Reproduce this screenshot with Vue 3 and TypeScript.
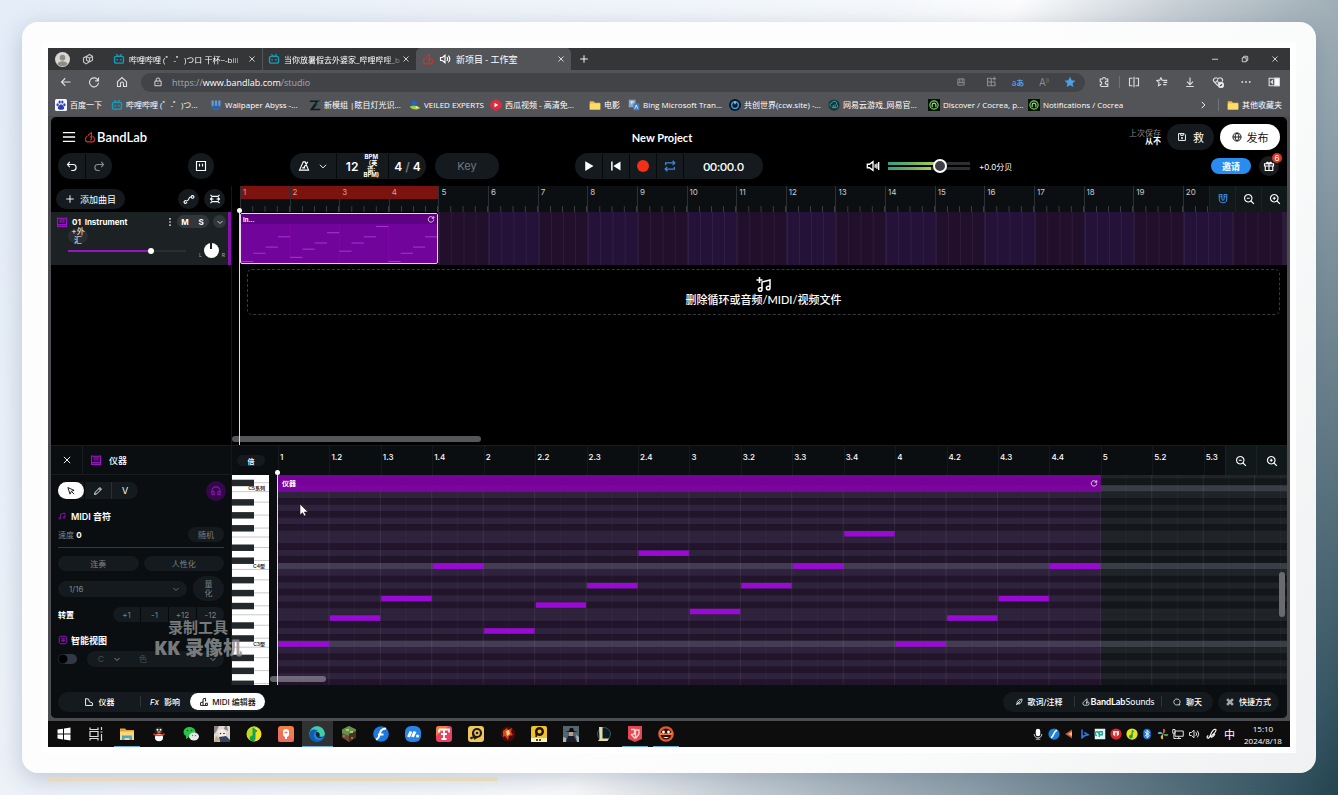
<script setup lang="ts">
import { ref } from 'vue'

const ic: Record<string, string> = {
  copies: 'M6 4.5 10 2l4 2.5v5L10 12M10 12 6 9.5v-5M6 4.5l-4 2v5.500l3.500 2.500 4-2.500M10 12V7l4-2.500M10 7 6 4.500',
  close: 'M3 3l10 10M13 3L3 13',
  plus: 'M8 2v12M2 8h12',
  back: 'M14 8H2M7 3L2 8l5 5',
  reload: 'M13.500 6A6 6 0 1 0 14 9M14 2v4.500H9.500',
  home: 'M2 7.500 8 2l6 5.500V14h-4v-4a2 2 0 0 0-4 0v4H2z',
  lock: 'M3 6.500h10V14H3zM5 6.500V4.500a3 3 0 0 1 6 0v2M8 9.500v1.500',
  speaker: 'M2 6v4h2.500L8 13V3L4.500 6zM10.500 5.500a4 4 0 0 1 0 5M12.500 3.500a7 7 0 0 1 0 9',
  app: 'M3 3h10v10H3zM6 3v6M10 3v6M3 9h10',
  grid: 'M2 3h5v5H2zM2 8h5v5H2zM7 8h5v5H7zM11 1v5M8.500 3.500h5',
  puzzle: 'M3 4h3a2 2 0 0 1 4 0h3v3.500a2 2 0 1 0 0 3V14H4.500A2.500 2.500 0 0 1 3 11.500a2 2 0 1 0 0-4z',
  split: 'M6 3H2v10h4M10 3h4v10h-4M8 1v14',
  favs: 'M6.500 2 8 5.500l3 .3M6.500 2 5 5.500l-4 .5 3 2.800L3.300 13l3.500-2M10 8.500h5M11 5.800h4M9.500 11.500H14',
  down: 'M8 2v9M4 7.500 8 11.500l4-4M3 14h10',
  heart: 'M8 13 2.500 7.500a3 3 0 0 1 5.500-3.500 3 3 0 0 1 5.500 3.500M2.500 8h3l1.500-2 2 4 1-2',
  chevR: 'M6 3l5 5-5 5',
  chevD: 'M3 6 8 11 13 6',
  menu: 'M1 3h14M1 8h14M1 13h14',
  undo: 'M5 2.500 2 6l3 3.500M2 6h7.500a4 4 0 0 1 0 8H7',
  redo: 'M11 2.500 14 6l-3 3.500M14 6H6.500a4 4 0 0 0 0 8H9',
  pads: 'M2 2h12v12H2zM6 5v3.500M10 5v3.500',
  metro: 'M7 2.500h2.500L14 13.500H2zM13 2.500 7.500 10.500M5.500 10.500h4',
  loop: 'M3 7V4.500h10.500M11 2l2.500 2.500L11 7M13 9v2.500H2.500M5 9l-2.500 2.500L5 14',
  vol: 'M1.500 6v4h2.500L8 13V3L4 6zM10.500 6v4M12.500 5v6M14.500 3.500v9',
  save: 'M2.500 2.500h9l2 2v9h-11zM6 2.500v3h4v-3M8 8v3.500M6.500 9.500h3',
  globe: 'M8 1.500a6.500 6.500 0 1 0 .01 0M1.500 8h13M8 1.500c-4 4-4 9 0 13M8 1.500c4 4 4 9 0 13',
  gift: 'M2 5h12v3H2zM3 8v6h10V8M8 5v9M8 5C3 5 5 .5 8 5M8 5c5 0 3-4.500 0 0',
  auto: 'M5 12a1.800 1.800 0 1 1-.6-1.300C9 11 6.500 5.500 10.500 5M14 4a1.800 1.800 0 1 1-.01-.01',
  fit: 'M2 2.500 4 4.500h8l2-2M2 13.500l2-2h8l2 2M1.500 8H6M10 8h4.500M4 6 2 8l2 2M12 6l2 2-2 2',
  piano: 'M2 3h12v11H2zM2 3V1.500M14 3V1.500M5.500 3v6M8 3v6M10.500 3v6M2 11.500h12',
  magnet: 'M3 2v6a5 5 0 0 0 10 0V2H9.500v6a1.500 1.500 0 0 1-3 0V2zM3 5h3.500M9.500 5H13',
  zoomOut: 'M7 2a5 5 0 1 0 .01 0M11 11l3.500 3.500M5 7h4',
  zoomIn: 'M7 2a5 5 0 1 0 .01 0M11 11l3.500 3.500M5 7h4M7 5v4',
  cycle: 'M13 6.500A5.500 5.500 0 1 0 13.500 9M13.500 2.500v4h-4',
  music: 'M6 12.500V5l8-2v8M6 12.500a1.800 1.800 0 1 1-1.800-1.800H6M14 11a1.800 1.800 0 1 1-1.800-1.800H14M3.500 0v6M.5 3h6',
  note: 'M5 12.500V4l9-2v9M5 12.500a1.800 1.800 0 1 1-1.800-1.800H5M14 11a1.800 1.800 0 1 1-1.800-1.800H14',
  arrow: 'M3 2.500 13 7 8.500 8.500 6.500 13zM9 9l4 4',
  pencil: 'M2.500 13.500 3.500 10 11 2.500l2.500 2.500L6 12.500zM9.500 4l2.500 2.500',
  phones: 'M2.500 13V8a5.500 5.500 0 0 1 11 0v5h-3V9h3M2.500 9h3v4h-3',
  smart: 'M2 3.500 3.500 2h9L14 3.500v9L12.500 14h-9L2 12.500zM5 6h6M5 9h6M8 6v5.500',
  keys: 'M2.500 13.500v-11l5 1 1 4 5 2v4z',
  midi: 'M2.500 13.500V9l4-1V3l4-1v5M2.500 13.500h11V10h-3M6.500 8v5M10.500 10v3.500',
  feather: 'M2 14 11 5M4 12c-1-6 4-9 10-10 0 6-3 11-10 10M6 10h4',
  chat: 'M8 2a6 6 0 1 0 2 11.500l3.500.5-.5-2.500A6 6 0 0 0 8 2',
  cmd: 'M6 6H4a2 2 0 1 1 2-2v8a2 2 0 1 1-2-2h8a2 2 0 1 1-2 2V4a2 2 0 1 1 2 2H6',
  flame: 'M4.500 6.500C1 9 1 14.500 5 14.500h6c4 0 4-5.500.5-8M8 12a2 2 0 1 0 0-4.200M10 10V1.500C9 4 6 3.500 5.500 6.500',
  min: 'M2 8.500h12',
  restore: 'M2.500 5.500h8v8h-8zM5 5V4a1.500 1.500 0 0 1 1.500-1.500H12A1.500 1.500 0 0 1 13.500 4v6a1.500 1.500 0 0 1-1.500 1.500h-1',
  taskview: 'M2 1.500v2h8v-2M2 14.500v-2h8v2M2 5.500h8v5H2zM13.500 1v3M13.500 8v7M12.500 6h2',
  net: 'M4 4h11v7H4zM9 11v3M6 14h6M1 2h3v5H1zM2.500 7v7H6',
  pen: 'M3 10c-3 2-1 5 1 3s2-5 4-8 4-4 5-3 0 3-3 6-4 3-3 4 3-1 5-4',
}

const bili = '<rect x="2" y="4.500" width="12" height="9" rx="2" fill="none" stroke="#10a0bd" stroke-width="1.800"/><path d="M4.500 1.500 7 4.500M11.500 1.500 9 4.500M5.500 8v2M10.500 8v2" stroke="#10a0bd" stroke-width="1.700"/>'
const folder = '<path d="M1 3h5l2 2h7v9H1z" fill="#eebd3c"/><path d="M1 6h14v8H1z" fill="#fddc6b"/>'
const cocrea = '<rect width="16" height="16" fill="#061006"/><circle cx="8" cy="8" r="5.500" fill="none" stroke="#71cf57" stroke-width="1.600"/><path d="M5.500 11V8a2.500 2.500 0 0 1 5 0v3" fill="none" stroke="#9be676" stroke-width="1.500"/>'

const bookmarks = [
  { t: '百度一下', w: 56, art: '<rect width="16" height="16" rx="2" fill="#f4f7ff"/><g fill="#2740b8"><ellipse cx="3.500" cy="7.500" rx="1.500" ry="2"/><ellipse cx="6.200" cy="4" rx="1.500" ry="2"/><ellipse cx="9.800" cy="4" rx="1.500" ry="2"/><ellipse cx="12.500" cy="7.500" rx="1.500" ry="2"/><path d="M8 7c2 0 5 4 4 6s-7 1.500-8 0 2-6 4-6"/></g>' },
  { t: '哔哩哔哩 (゜-゜)つ...', w: 99, art: bili },
  { t: 'Wallpaper Abyss -...', w: 99, art: '<path d="M2 2v7a6 5 0 0 0 12 0V2h-3v7H9.500V2h-3v7H5V2z" fill="#5b9ee0"/><path d="M2 9a6 5 0 0 0 12 0z" fill="#2b62ad"/>' },
  { t: '新模组 |眩目灯光识...', w: 100, art: '<path d="M1 2h14L6 13h9v2H1l8-11H1z" fill="#0b1d1c"/><path d="M8 8l6-6v3z" fill="#19796a"/>' },
  { t: 'VEILED EXPERTS', w: 81, art: '<path d="M4 1l6 3v7L4 9z" fill="#2366c9"/><path d="M1 10c4-2 10-1 14 2-4 3-12 3-14-2" fill="#aacb3c"/><path d="M9 9l4 2-4 2z" fill="#eee9c0"/>' },
  { t: '西瓜视频 - 高清免...', w: 99, art: '<path d="M8 0c4 2 8 4 8 8s-4 6-8 8c-4-2-8-4-8-8s4-6 8-8" fill="#dd2b3f"/><path d="M6 5l5 3-5 3z" fill="#fff"/>' },
  { t: '电影', w: 39, art: folder },
  { t: 'Bing Microsoft Tran...', w: 101, art: '<rect x="1" y="1" width="9" height="10" fill="#8ba6c4"/><rect x="7" y="6" width="8" height="9" fill="#477fc4"/><path d="M3 4h5M5 3v4M9 13l2-5 2 5" stroke="#fff" fill="none"/>' },
  { t: '共创世界(ccw.site) -...', w: 99, art: '<circle cx="8" cy="8" r="8" fill="#06182a"/><circle cx="8" cy="8" r="4.500" fill="none" stroke="#3b9cd8" stroke-width="2"/><path d="M8 3v4" stroke="#c7efff" stroke-width="1.500"/>' },
  { t: '网易云游戏_网易官...', w: 100, art: '<circle cx="8" cy="8" r="7.500" fill="#12363e"/><path d="M3.500 10a3 3 0 0 1 2-5 3 3 0 0 1 6 2 2.500 2.500 0 0 1 0 4.500H5M7 12V8M9.500 12V7" fill="none" stroke="#33aaa3" stroke-width="1.300"/>' },
  { t: 'Discover / Cocrea, p...', w: 100, art: cocrea },
  { t: 'Notifications / Cocrea', w: 96, art: cocrea },
]

const tasks = [
  { n: 'Windows', art: '<path d="M1.500 3.500 7 2.700V7.600H1.500zM8 2.500l6.500-1v6.100H8zM1.500 8.500H7v4.900l-5.500-.8zM8 8.500h6.500v6L8 13.600z" fill="#fff"/>' },
  { n: 'Task view', art: `<path d="${ic.taskview}" fill="none" stroke="#ddd" stroke-width="1.200"/>` },
  { n: 'Explorer', on: 1, art: '<path d="M1 2.500h5l1.500 1.500H15v10H1z" fill="#e3a33a"/><path d="M1 5.500h14V14H1z" fill="#fbd873"/><path d="M3 14V9.500h10V14h-2.500v-2h-5v2z" fill="#4aa5d8"/>' },
  { n: 'QQ', art: '<ellipse cx="8" cy="9.500" rx="5.500" ry="5.500" fill="#1b1414"/><ellipse cx="8" cy="5" rx="4" ry="4" fill="#2b2525"/><ellipse cx="8" cy="11.500" rx="4" ry="3.800" fill="#fff"/><path d="M2.500 7c3 2 8 2 11 0v2c-3 1.500-8 1.500-11 0z" fill="#e43a2c"/><circle cx="6.500" cy="3.700" r="1" fill="#fff"/><circle cx="9.500" cy="3.700" r="1" fill="#fff"/><ellipse cx="8" cy="6" rx="2" ry=".8" fill="#f2a33a"/>' },
  { n: 'WeChat', art: '<ellipse cx="6.500" cy="6" rx="6" ry="5" fill="#28c445"/><path d="M3 9v4l3-2z" fill="#28c445"/><ellipse cx="11" cy="10.500" rx="5" ry="4" fill="#e8e8e8"/><circle cx="9.500" cy="9.500" r=".7" fill="#777"/><circle cx="12.500" cy="9.500" r=".7" fill="#777"/><circle cx="4.500" cy="4.500" r=".8" fill="#0a5a18"/><circle cx="8.500" cy="4.500" r=".8" fill="#0a5a18"/>' },
  { n: 'Game', art: '<rect width="16" height="16" rx="1" fill="#dcd8d5"/><path d="M0 0h5l-3 6-2 2zM11 0h2l1 5-4-2z" fill="#8e8282"/><path d="M4 5c3-3 7-2 8 1v5H5z" fill="#f7ece6"/><path d="M5 11l7-1 4 4v2H6z" fill="#38425f"/><path d="M2 10l4 3-2 3H0z" fill="#bfae8e"/><circle cx="6.500" cy="7.500" r=".8" fill="#333"/><circle cx="10" cy="7.500" r=".8" fill="#333"/>' },
  { n: 'Music', art: '<circle cx="8" cy="8" r="7.500" fill="#f3df1f"/><path d="M8 .5A7.500 7.500 0 0 0 4 14l3-4-1-5 5-4z" fill="#b9dd1e"/><path d="M7 2l4 3-2 1v6a2.500 2.500 0 1 1-2-2z" fill="#16a05a" stroke="#16a05a"/>' },
  { n: 'Voice', art: '<rect width="16" height="16" rx="3" fill="#ee7f4c"/><path d="M0 16V4l16 9v3z" fill="#e6606c" opacity=".5"/><rect x="5" y="3" width="6" height="8" rx="3" fill="#fff"/><path d="M8 10v3" stroke="#fff" stroke-width="2"/><path d="M6.500 6.500h3" stroke="#ef7c54" stroke-width="1.500"/>' },
  { n: 'Edge', on: 1, act: 1, art: '<circle cx="8" cy="8" r="7.800" fill="#1f7fd4"/><path d="M.5 7A7.700 7.700 0 0 1 15.800 7c.3 3-2.500 4-5 3.500C12 7 9 5 6.500 5.500 3.500 5.500 1 7 .5 9z" fill="#42cf9d"/><path d="M.3 8C1 3 6 2.500 9 5 5 5 3.500 9 6 12.500c2 2.500 6 2 8-.5C10 19 0 16 .3 8" fill="#0f5db3"/><path d="M7 6.500c3-1 4.500 2 3 4 1.500 1 4.500.7 5.500-.5C12 14 6 12 7 6.500" fill="#202225"/>' },
  { n: 'Minecraft', art: '<path d="M8 0l7 3.500v8L8 16l-7-4.500v-8z" fill="#6d4b34"/><path d="M8 0l7 3.500V7L8 10 1 7V3.500z" fill="#609345"/><path d="M8 8v8l7-4.500V5z" fill="#49301f"/><path d="M5 3h3v2H5zM9 5h3v2H9z" fill="#afc386"/><path d="M2 9h2v2H2zM10 11h2v2h-2z" fill="#9b7454"/>' },
  { n: 'Fl', art: '<circle cx="8" cy="8" r="7.800" fill="#1e78e0"/><path d="M13 2.500C8 3 7.500 5 6.500 9S5 12.500 3 13.500M5 8.500h5.500" stroke="#fff" stroke-width="2" fill="none"/>' },
  { n: 'Mumu', art: '<rect width="16" height="16" rx="6" fill="#2a83e6"/><path d="M3.500 11 6 5.500M7.500 11 10 5.500" stroke="#fff" stroke-width="3" fill="none"/><circle cx="12.500" cy="10" r="1.500" fill="#fff"/>' },
  { n: 'Tools', art: '<rect width="16" height="16" rx="3" fill="#e54361"/><path d="M0 10V3a3 3 0 0 1 3-3h10z" fill="#ef7b42"/><path d="M3 3.500h10v3M3 6.500v-3M8 3.500V13M5 8h6M5.500 13h5" fill="none" stroke="#fff" stroke-width="1.800"/>' },
  { n: 'Potplayer', art: '<rect width="16" height="16" rx="3" fill="#edc65c"/><circle cx="9" cy="7" r="4" fill="none" stroke="#201a0c" stroke-width="2.200"/><circle cx="9" cy="7" r="1.300" fill="#201a0c"/><path d="M5.500 8v4M9 11l-3 2" stroke="#201a0c" stroke-width="2"/><circle cx="3.500" cy="12" r="1.300" fill="#201a0c"/>' },
  { n: 'Fire', art: '<circle cx="8" cy="8" r="7.500" fill="#4c0808"/><path d="M3 5l4-3 1 2 4-2-1 4 2 3-4 1-1 4-3-4-2 1z" fill="#d94521"/><path d="M6 5l3-1 1 4-3 2z" fill="#f9d587"/>' },
  { n: 'Player', art: '<rect width="16" height="16" rx="2" fill="#f0c128"/><path d="M0 12h16v4H0z" fill="#fff3bd"/><circle cx="8.500" cy="5.500" r="3.300" fill="none" stroke="#1d1603" stroke-width="2.400"/><path d="M5.200 5v6M6 13v2M9 13v2" stroke="#1d1603" stroke-width="1.500"/>' },
  { n: 'Photo', art: '<rect width="16" height="16" fill="#54656f"/><path d="M2 6l4-1 1-3h3l1 3 4 1z" fill="#0b0b0f"/><path d="M6 6h4v4H6z" fill="#b69c91"/><path d="M3 16l2-6h6l3 6z" fill="#1b1d27"/><path d="M0 11l3 1v4H0zM13 9l3 2v5h-2z" fill="#a8b6bb"/>' },
  { n: 'League', art: '<circle cx="9" cy="8" r="6.500" fill="#0c1b21" stroke="#2c5a66"/><path d="M4 1h3.500v11.500H14L12.500 15H3l1.500-2z" fill="#e6dca8"/>' },
  { n: 'Video', on: 1, art: '<path d="M1 0h14v13l-7 3-7-3z" fill="#e04856"/><path d="M4 3.500h3.500V8H5.500M8.500 12.500V4H12v4L8.500 12.500M4 8l4 4.500" fill="none" stroke="#ffd0c8" stroke-width="1.300"/>' },
  { n: 'Recorder', on: 1, art: '<circle cx="8" cy="8" r="7.800" fill="#e25a2e"/><circle cx="8" cy="8" r="5.500" fill="#34120c"/><path d="M1 6c4 2 10 2 14 0l-1 3H2z" fill="#f08342"/><circle cx="5.500" cy="6" r="1.400" fill="#fff"/><circle cx="10.500" cy="6" r="1.400" fill="#fff"/><path d="M5 11c2 1.500 4 1.500 6 0z" fill="#fff"/>' },
]

const ln = (d: string) => `<path d="${d}" fill="none" stroke="#e4e4e4" stroke-width="1.300"/>`
const tray = [
  '<rect x="5" y="1" width="6" height="10" rx="3" fill="#fff"/><path d="M3 8a5 5 0 0 0 10 0M8 13v2M5 15h6" stroke="#bbb" fill="none" stroke-width="1.500"/>',
  '<circle cx="8" cy="8" r="7.500" fill="#1e7fd8"/><path d="M12 3C7 4 9 10 4 13" stroke="#fff" fill="none" stroke-width="2"/>',
  '<path d="M12 2v12L3 8z" fill="#ce5b35"/><path d="M12 5v6L7 8z" fill="#f0bd95"/>',
  '<path d="M4 2v11l3-2M5 11l7-2-5-3" stroke="#2b7ce8" stroke-width="2" fill="none"/>',
  '<rect x="1" y="1" width="14" height="14" fill="#dff5ef"/><path d="M4 10a2.500 2.500 0 0 1 0-5c2 0 4 6 7 4M7 12V5h4v5" fill="none" stroke="#1f9f96" stroke-width="1.800"/>',
  '<circle cx="8" cy="8" r="7.500" fill="#d7242e"/><path d="M4 4h8v5l-4 3-4-3z" fill="#fbe4dc"/><path d="M8 6v6" stroke="#d7242e" stroke-width="2"/>',
  '<circle cx="8" cy="8" r="7.500" fill="#e8e222"/><path d="M8 2l3 3-2 1v5a2.500 2.500 0 1 1-2-2z" fill="#189b50"/>',
  '<rect x="3" y="1" width="10" height="14" rx="5" fill="#1677dd"/><path d="M5 5l6 5-3 3V3l3 3-6 5" stroke="#fff" fill="none" stroke-width="1.200"/>',
  '<path d="M8 8V1c4 0 4 5 0 7" fill="#e64c3c"/><path d="M8 8h7c0 4-5 4-7 0" fill="#34a853"/><path d="M8 8v7c-4 0-4-5 0-7" fill="#f5b32d"/><path d="M8 8H1c0-4 5-4 7 0" fill="#55a7e8"/>',
  ln(ic.net), ln(ic.speaker),
]

/* Pitches are semitones above C3, one note per beat. */
const pitches = [0, 4, 7, 12, 2, 6, 9, 14, 5, 9, 12, 17, 0, 4, 7, 12]
const beatW = 100
const rowH = 6.48
const c3Top = 165.7
const rowTop = (p: number) => c3Top - p * rowH
const isBlack = (p: number) => [1, 3, 6, 8, 10].includes(((p % 12) + 12) % 12)
const rows = Array.from({ length: 33 }, (_, i) => {
  const p = 26 - i
  return { p, y: rowTop(p), black: isBlack(p), c: ((p % 12) + 12) % 12 === 0 }
})
const whiteLines = rows.filter(r => [0, 5].includes(((r.p % 12) + 12) % 12)).map(r => r.y + rowH)
const blackKeys = rows.filter(r => r.black)

const beatLabels = ['1', '1.2', '1.3', '1.4', '2', '2.2', '2.3', '2.4', '3', '3.2', '3.3', '3.4', '4', '4.2', '4.3', '4.4', '5', '5.2', '5.3']
const master = ref(66)
const trackVol = ref(71)
const velocity = ref(0)
const quant = ref('1/16')
const smart = ref(false)
</script>

<template>
  <div class="page">
    <main class="card">
      <div class="screen">
        <header class="tabs">
          <svg class="avatar" viewBox="0 0 16 16"><circle cx="8" cy="8" r="8" fill="#d9d7d3" /><circle cx="8" cy="6" r="3" fill="#8f8b87" /><path d="M2.500 13a6 5 0 0 1 11 0 8 8 0 0 1-11 0" fill="#8f8b87" /></svg>
          <svg class="i i12 work" viewBox="0 0 16 16"><path :d="ic.copies" /></svg>
          <div class="tab">
            <svg class="fav" viewBox="0 0 16 16" v-html="bili" />
            <span class="tab-t fade">哔哩哔哩 (゜-゜)つロ 干杯~-bili</span>
            <button class="bare" aria-label="关闭"><svg class="i i8" viewBox="0 0 16 16"><path :d="ic.close" /></svg></button>
          </div>
          <div class="tab second">
            <svg class="fav" viewBox="0 0 16 16" v-html="bili" />
            <span class="tab-t fade">当你放暑假去外婆家_哔哩哔哩_b</span>
            <button class="bare" aria-label="关闭"><svg class="i i8" viewBox="0 0 16 16"><path :d="ic.close" /></svg></button>
          </div>
          <div class="tab active">
            <svg class="i i12 red" viewBox="0 0 16 16"><path :d="ic.flame" /></svg>
            <svg class="i i12" viewBox="0 0 16 16"><path :d="ic.speaker" /></svg>
            <span class="tab-t">新项目 - 工作室</span>
            <button class="bare" aria-label="关闭"><svg class="i i8" viewBox="0 0 16 16"><path :d="ic.close" /></svg></button>
          </div>
          <button class="bare newtab" aria-label="新标签页"><svg class="i i10" viewBox="0 0 16 16"><path :d="ic.plus" /></svg></button>
          <div class="grow" />
          <button v-for="w in ['min', 'restore', 'close']" :key="w" class="bare win" :aria-label="w"><svg class="i i8" viewBox="0 0 16 16"><path :d="ic[w]" /></svg></button>
        </header>

        <nav class="tools">
          <button v-for="b in ['back', 'reload', 'home']" :key="b" class="bare nav" :aria-label="b"><svg class="i i12" viewBox="0 0 16 16"><path :d="ic[b]" /></svg></button>
          <div class="addr">
            <svg class="i i10" viewBox="0 0 16 16"><path :d="ic.lock" /></svg>
            <a href="#" class="url">https://<b>www.bandlab.com</b>/studio</a>
            <button class="bare ad dim first" aria-label="应用"><svg class="i i10" viewBox="0 0 16 16"><path :d="ic.app" /></svg></button>
            <button class="bare ad dim" aria-label="扩展"><svg class="i i12" viewBox="0 0 16 16"><path :d="ic.grid" /></svg></button>
            <button class="bare ad trans">aあ</button>
            <button class="bare ad dim read">A<sup>))</sup></button>
            <button class="bare ad" aria-label="收藏"><svg class="star" viewBox="0 0 16 16"><path d="M8 1l2.200 4.700 5 .6-3.700 3.500 1 5L8 12.300l-4.500 2.500 1-5L.8 6.300l5-.6z" /></svg></button>
          </div>
          <button class="bare ext" aria-label="扩展"><svg class="i i12" viewBox="0 0 16 16"><path :d="ic.puzzle" /></svg></button>
          <span class="vr" />
          <button v-for="b in ['split', 'favs', 'down', 'heart']" :key="b" class="bare nav" :aria-label="b">
            <svg class="i i12" viewBox="0 0 16 16"><path :d="ic[b]" /><g v-if="b === 'heart'"><circle cx="12" cy="12" r="3.500" class="wf" /><path d="M10.500 12l1 1 2-2" class="ds" /></g></svg>
          </button>
          <button class="bare nav" aria-label="更多"><svg class="dots" viewBox="0 0 16 16"><circle cx="3" cy="8" r="1.200" /><circle cx="8" cy="8" r="1.200" /><circle cx="13" cy="8" r="1.200" /></svg></button>
          <button class="bare nav" aria-label="侧栏"><svg class="i i12" viewBox="0 0 16 16"><path d="M1.500 3h13v10h-13z" /><path d="M9 3h6v10H9z" class="wf" /><path d="M6 6v4L4 8z" class="wf" /></svg></button>
        </nav>

        <nav class="marks">
          <a v-for="b in bookmarks" :key="b.t" href="#" class="mark" :style="{ width: b.w + 'px' }"><svg viewBox="0 0 16 16" v-html="b.art" /><span>{{ b.t }}</span></a>
          <div class="grow" />
          <svg class="i i10" viewBox="0 0 16 16"><path :d="ic.chevR" /></svg>
          <span class="vr" />
          <a href="#" class="mark last"><svg viewBox="0 0 16 16" v-html="folder" /><span>其他收藏夹</span></a>
        </nav>

        <div class="shell">
          <section class="studio">
            <div class="top">
              <button class="bare burger" aria-label="菜单"><svg class="i i14" viewBox="0 0 16 16"><path :d="ic.menu" /></svg></button>
              <a href="#" class="brand"><svg class="i i12 red" viewBox="0 0 16 16"><path :d="ic.flame" /></svg>BandLab</a>
              <h1>New Project</h1>
              <div class="right">
                <p class="saved">上次保存<b>从不</b></p>
                <button class="pill savebtn"><svg class="i i10" viewBox="0 0 16 16"><path :d="ic.save" /></svg>救</button>
                <button class="pill publish"><svg class="i i10" viewBox="0 0 16 16"><path :d="ic.globe" /></svg>发布</button>
              </div>
            </div>

            <div class="transport">
              <div class="pill seg">
                <button class="c26" aria-label="撤销"><svg class="i i12" viewBox="0 0 16 16"><path :d="ic.undo" /></svg></button>
                <button class="c26 dim" aria-label="重做"><svg class="i i12" viewBox="0 0 16 16"><path :d="ic.redo" /></svg></button>
              </div>
              <button class="pill circ gap" aria-label="采样器"><svg class="i i12" viewBox="0 0 16 16"><path :d="ic.pads" /></svg></button>
              <div class="pill seg gap">
                <button class="metro" aria-label="节拍器"><svg class="i i12" viewBox="0 0 16 16"><path :d="ic.metro" /></svg><svg class="i i10" viewBox="0 0 16 16"><path :d="ic.chevD" /></svg></button>
                <button class="bpm"><span class="big">12</span><small>BPM<br>（英<br>语:<br>BPM)</small></button>
                <button class="sig big">4<i>/</i>4</button>
              </div>
              <button class="pill key">Key</button>
              <div class="pill seg gap">
                <button class="c26" aria-label="播放"><svg class="f i12" viewBox="0 0 16 16"><path d="M3 1.500 14 8 3 14.500z" /></svg></button>
                <button class="c26" aria-label="回到开头"><svg class="f i12" viewBox="0 0 16 16"><path d="M1.500 2h2v12h-2zM14 2v12L4.500 8z" /></svg></button>
                <button class="c26" aria-label="录音"><span class="rec" /></button>
                <button class="c26 blue" aria-label="循环"><svg class="i i14" viewBox="0 0 16 16"><path :d="ic.loop" /></svg></button>
                <output class="time">00:00.0</output>
              </div>
              <label class="master">
                <svg class="i i14" viewBox="0 0 16 16"><path :d="ic.vol" /></svg>
                <input v-model="master" type="range" aria-label="主音量">
                <span>+0.0分贝</span>
              </label>
              <div class="grow" />
              <button class="invite">邀请</button>
              <button class="gift" aria-label="礼物"><svg class="i i12" viewBox="0 0 16 16"><path :d="ic.gift" /></svg><span class="badge">6</span></button>
            </div>

            <div class="arrange">
              <aside class="side">
                <div class="addrow">
                  <button class="pill add"><svg class="i i10" viewBox="0 0 16 16"><path :d="ic.plus" /></svg>添加曲目</button>
                  <button class="pill round" aria-label="自动化"><svg class="i i12" viewBox="0 0 16 16"><path :d="ic.auto" /></svg></button>
                  <button class="pill round" aria-label="适应"><svg class="i i12" viewBox="0 0 16 16"><path :d="ic.fit" /></svg></button>
                </div>
                <div class="track">
                  <div class="t1">
                    <svg class="i i12 purple" viewBox="0 0 16 16"><path :d="ic.piano" /></svg>
                    <b>01&nbsp; Instrument</b>
                    <svg class="dots v" viewBox="0 0 16 16"><circle cx="8" cy="3" r="1.300" /><circle cx="8" cy="8" r="1.300" /><circle cx="8" cy="13" r="1.300" /></svg>
                    <span class="ms"><button>M</button><button>S</button></span>
                    <button class="exp" aria-label="展开"><svg class="i i8" viewBox="0 0 16 16"><path :d="ic.chevD" /></svg></button>
                  </div>
                  <div class="t2">
                    <button class="fx">+外<br>汇</button>
                    <input v-model="trackVol" type="range" aria-label="音轨音量">
                    <span class="lr">L</span><span class="knob" /><span class="lr">R</span>
                  </div>
                </div>
              </aside>

              <div class="lanes">
                <div class="ruler">
                  <span v-for="n in 21" :key="n" :class="{ loop: n < 5 }">{{ n < 21 ? n : '' }}</span>
                  <span />
                </div>
                <div class="zooms small">
                  <button class="blue" aria-label="吸附"><svg class="i i12" viewBox="0 0 16 16"><path :d="ic.magnet" /></svg></button>
                  <button aria-label="缩小"><svg class="i i12" viewBox="0 0 16 16"><path :d="ic.zoomOut" /></svg></button>
                  <button aria-label="放大"><svg class="i i12" viewBox="0 0 16 16"><path :d="ic.zoomIn" /></svg></button>
                </div>
                <div class="lane">
                  <div class="clip">
                    <div class="cliphead"><span>In...</span><svg class="i i8" viewBox="0 0 16 16"><path :d="ic.cycle" /></svg></div>
                    <svg class="mini" viewBox="0 0 160 38" preserveAspectRatio="none"><rect v-for="(p, i) in pitches" :key="i" :x="i * 10" :y="36 - p * 2" width="10" height="1" /></svg>
                  </div>
                  <span v-for="n in 17" :key="n" class="bar" :class="{ alt: n % 2 === 0 }" />
                  <span class="bar" />
                </div>
                <div class="drop">
                  <svg class="i i16" viewBox="0 0 16 16"><path :d="ic.music" /></svg>
                  <span>删除循环或音频/MIDI/视频文件</span>
                </div>
                <div class="grow" />
                <div class="hscroll" />
                <span class="playhead" />
              </div>
            </div>

            <div class="editor">
              <aside class="epanel">
                <div class="ehead">
                  <button class="bare ex" aria-label="关闭"><svg class="i i10" viewBox="0 0 16 16"><path :d="ic.close" /></svg></button>
                  <svg class="i i12 purple" viewBox="0 0 16 16"><path :d="ic.piano" /></svg>
                  <b>仪器</b>
                </div>
                <div class="ebody">
                  <div class="row tls">
                    <div class="pill seg modes">
                      <button class="sel" aria-label="选择"><svg class="i i10" viewBox="0 0 16 16"><path :d="ic.arrow" /></svg></button>
                      <button aria-label="铅笔"><svg class="i i10" viewBox="0 0 16 16"><path :d="ic.pencil" /></svg></button>
                      <button class="vkey">V</button>
                    </div>
                    <button class="hp" aria-label="试听"><svg class="i i12" viewBox="0 0 16 16"><path :d="ic.phones" /></svg></button>
                  </div>
                  <h2 class="h-midi"><svg class="i i8 purple" viewBox="0 0 16 16"><path :d="ic.note" /></svg>MIDI 音符</h2>
                  <div class="row vel"><label for="vel">速度 <b>{{ velocity }}</b></label><button class="pill sm rnd">随机</button></div>
                  <input id="vel" v-model="velocity" type="range" class="thin">
                  <div class="row two"><button class="pill sm">连奏</button><button class="pill sm">人性化</button></div>
                  <div class="row q">
                    <span class="selwrap"><select v-model="quant" aria-label="量化值"><option>1/16</option></select><svg class="i i8" viewBox="0 0 16 16"><path :d="ic.chevD" /></svg></span>
                    <button class="pill qz">量<br>化</button>
                  </div>
                  <div class="row tr"><b>转置</b><div class="pill seg sm"><button v-for="s in ['+1', '-1', '+12', '-12']" :key="s">{{ s }}</button></div></div>
                  <h2 class="h-smart"><svg class="i i10 purple" viewBox="0 0 16 16"><path :d="ic.smart" /></svg>智能视图</h2>
                  <div class="row sv">
                    <input v-model="smart" type="checkbox" aria-label="智能视图">
                    <div class="scale">
                      <span class="selwrap root"><select aria-label="根音"><option>C</option></select><svg class="i i8" viewBox="0 0 16 16"><path :d="ic.chevD" /></svg></span>
                      <span class="selwrap mode"><select aria-label="音阶"><option>色</option></select><svg class="i i8" viewBox="0 0 16 16"><path :d="ic.chevD" /></svg></span>
                    </div>
                  </div>
                </div>
              </aside>

              <div class="roll">
                <div class="rhead">
                  <div class="oct"><button class="pill">倍</button></div>
                  <div class="beats"><span v-for="b in beatLabels" :key="b">{{ b }}</span><span /></div>
                  <div class="zooms">
                    <button aria-label="缩小"><svg class="i i12" viewBox="0 0 16 16"><path :d="ic.zoomOut" /></svg></button>
                    <button aria-label="放大"><svg class="i i12" viewBox="0 0 16 16"><path :d="ic.zoomIn" /></svg></button>
                  </div>
                </div>
                <div class="rbody">
                  <div class="keys">
                    <svg viewBox="0 0 37 210">
                      <rect width="37" height="210" fill="#fff" />
                      <path v-for="y in whiteLines" :key="y" :d="`M0 ${y}h37`" stroke="#c9c9c9" />
                      <g v-for="k in blackKeys" :key="k.p"><path :d="`M22 ${k.y + 4}h15`" stroke="#c9c9c9" /><rect x="0" :y="k.y + 1" width="22" :height="rowH" fill="#23282c" /></g>
                    </svg>
                    <span class="kl k5">C5系列</span><span class="kl k4">C4型</span><span class="kl k3">C3型</span>
                  </div>
                  <div class="canvas">
                    <svg class="gridsvg" viewBox="0 0 1962 210" preserveAspectRatio="none">
                      <rect v-for="r in rows" :key="r.p" x="0" :y="r.y" width="1962" :height="rowH" :class="r.c ? 'rc' : r.black ? 'rb' : 'rw'" />
                      <rect v-for="r in rows" :key="'i' + r.p" x="0" :y="r.y" width="1600" :height="rowH" :class="r.c ? 'ic' : r.black ? 'ib' : 'iw'" />
                      <rect v-for="n in 39" :key="'v' + n" :x="n * beatW / 2 - 2" y="0" width="2" height="210" :class="n % 2 ? 'gl' : 'gl strong'" />
                      <rect x="0" y="0" width="1600" height="17" fill="#8100a6" fill-opacity=".9" />
                      <rect v-for="(p, i) in pitches" :key="'n' + i" :x="i * beatW + 1" :y="rowTop(p) + .5" width="98" height="5.500" fill="#990bd4" />
                    </svg>
                    <span class="cname">仪器</span>
                    <svg class="i i8 ccyc" viewBox="0 0 16 16"><path :d="ic.cycle" /></svg>
                    <svg class="cursor" viewBox="0 0 10 14"><path d="M1 1v11l2.500-2.300L5.200 13l1.800-.8-1.600-3.200H9z" fill="#fff" stroke="#111" stroke-width=".6" /></svg>
                    <span class="vscroll" />
                  </div>
                  <span class="kscroll" />
                </div>
                <span class="playhead" />
              </div>
              <div class="watermark"><span>录制工具</span><strong>KK 录像机</strong></div>
            </div>

            <footer class="bottom">
              <div class="pill seg left">
                <button class="b1"><svg class="i i10" viewBox="0 0 16 16"><path :d="ic.keys" /></svg>仪器</button>
                <button class="b2"><i>Fx</i>影响</button>
                <button class="sel"><svg class="i i10" viewBox="0 0 16 16"><path :d="ic.midi" /></svg>MIDI 编辑器</button>
              </div>
              <div class="grow" />
              <div class="pill seg rgt">
                <button class="r1"><svg class="i i8" viewBox="0 0 16 16"><path :d="ic.feather" /></svg>歌词/注释</button>
                <button class="r2"><svg class="i i8" viewBox="0 0 16 16"><path :d="ic.flame" /></svg><span>BandLab<em>Sounds</em></span></button>
                <button class="r3"><svg class="i i8" viewBox="0 0 16 16"><path :d="ic.chat" /></svg>聊天</button>
              </div>
              <button class="pill short"><svg class="i i8" viewBox="0 0 16 16"><path :d="ic.cmd" /></svg>快捷方式</button>
            </footer>
          </section>
        </div>

        <footer class="taskbar">
          <div class="apps"><button v-for="t in tasks" :key="t.n" :class="{ on: t.on, act: t.act }" :aria-label="t.n"><svg viewBox="0 0 16 16" v-html="t.art" /></button></div>
          <div class="grow" />
          <div class="tray">
            <svg v-for="(t, i) in tray" :key="i" viewBox="0 0 16 16" v-html="t" />
          </div>
          <svg class="i i12 pen" viewBox="0 0 16 16"><path :d="ic.pen" /></svg>
          <span class="ime">中</span>
          <time>15:10<br>2024/8/18</time>
        </footer>
      </div>
    </main>
    <div class="underline" />
  </div>
</template>

<style>
body { margin: 0; }
</style>

<style scoped>
* { box-sizing: border-box; }
.page { min-height: 100vh; padding: 22px 22px 14px; display: flex; flex-direction: column; font-family: "Open Sans", "Noto Sans CJK SC", sans-serif; font-size: 9px; color: #fff;
  background: linear-gradient(119.500deg, #e4edf8 0%, #edf2f9 25%, #f5f8fb 50%, #fcfcfd 57%, #c8d0d6 66%, #a3b1b9 74%, #8fa1aa 79%, #69808a 87%, #3a5965 96%, #24444f 100%); }
.card { flex: 1; display: flex; padding: 26px; border-radius: 16px; background: linear-gradient(119deg, #fdfdfe 55%, #fafbfb 75%, #eff1f2); box-shadow: 0 6px 24px rgba(50, 70, 110, .26); }
.underline { width: 450px; height: 4px; margin: 4px 0 0 26px; border-radius: 2px; background: #e6dabb; position: relative; }
.screen { flex: 1; min-width: 0; display: flex; flex-direction: column; background: #535458; box-shadow: 0 0 0 6px #fff; }
button { font: inherit; color: inherit; padding: 0; margin: 0; border: 0; background: none; display: flex; align-items: center; justify-content: center; }
a { color: inherit; text-decoration: none; }
h1, h2, p { margin: 0; }
.grow { flex: 1; }
.i { fill: none; stroke: currentColor; stroke-width: 1.500; flex: none; }
.f { fill: currentColor; flex: none; }
.i8 { width: 8px; height: 8px; } .i10 { width: 10px; height: 10px; } .i12 { width: 12px; height: 12px; } .i14 { width: 14px; height: 14px; } .i16 { width: 16px; height: 16px; }
.red { color: #d2312b; } .purple { color: #9b10c8; } .blue { color: #3b86dd; } .dim { color: #8b8d91; }
.wf { fill: #fff; } .ds { stroke: #444; }

.tabs { height: 22px; display: flex; align-items: center; background: #353638; padding-left: 7px; font-size: 8px; }
.avatar { width: 15px; height: 15px; margin-right: 12px; }
.work { margin-right: 14px; color: #c4c5c7; }
.tab { width: 154px; height: 22px; display: flex; align-items: center; padding: 0 6px 0 5px; gap: 4px; }
.second { border-left: 1px solid #55565a; }
.tab.active { width: 155px; background: #535458; border-radius: 5px 5px 0 0; padding-left: 6px; font-size: 9px; gap: 5px; }
.tab-t { flex: 1; min-width: 0; white-space: nowrap; }
.fade { margin-right: -2px; mask-image: linear-gradient(90deg, #000 85%, rgba(0, 0, 0, .3)); }
.fav { width: 12px; height: 12px; flex: none; }
.newtab { width: 26px; height: 22px; }
.win { width: 30px; height: 22px; }

.tools { height: 25px; display: flex; align-items: center; padding: 0 2px 1px 4px; color: #dcdde0; }
.nav { width: 28px; height: 22px; }
.addr { flex: 1; height: 19px; margin-left: 5px; padding: 0 2px 0 12px; border-radius: 10px; background: #424347; display: flex; align-items: center; gap: 0; }
.url { flex: 1; margin-left: 9px; color: #a9abaf; }
.url b { font-weight: 400; color: #fff; }
.ad { width: 26px; height: 18px; }
.first { margin-right: 5px; }
.trans { color: #4e9ee0; font-size: 8px; font-weight: 600; }
.read { font-size: 10px; }
.read sup { font-size: 5px; margin-bottom: 5px; }
.star { width: 12px; height: 12px; fill: #4b9fe5; }
.ext { width: 30px; margin-left: 4px; height: 22px; }
.vr { width: 1px; height: 12px; background: #727377; }
.dots { width: 12px; height: 12px; fill: currentColor; }
.marks { height: 21px; display: flex; align-items: center; padding: 0 0 2px 7px; font-size: 8px; }
.mark { display: flex; align-items: center; gap: 3px; white-space: nowrap; flex: none; }
.mark svg { width: 12px; height: 12px; flex: none; }
.marks > .vr { margin: 0 8px 0 10px; }
.last { padding-right: 8px; }

.shell { flex: 1; padding: 1px 3px 3px; display: flex; background: #4c4d50; }
.studio { flex: 1; min-width: 0; display: flex; flex-direction: column; background: #000; border-radius: 5px; overflow: hidden; font-family: Inter, "Noto Sans CJK SC", sans-serif; }
.pill { background: #141a1d; border-radius: 14px; }
.seg { display: flex; align-items: stretch; }
.seg > * + * { border-left: 1px solid #070a0b; }
.top { display: flex; align-items: center; height: 33px; padding: 7px 7px 0 10px; }
.burger { width: 16px; }
.brand { display: flex; align-items: center; gap: 1px; margin-left: 7px; font-size: 13px; font-weight: 600; font-family: Lato, "Noto Sans CJK SC", sans-serif; }
.top h1 { flex: 1; text-align: center; font-size: 11px; font-weight: 700; font-family: Lato, sans-serif; padding-left: 48px; }
.right { display: flex; align-items: center; gap: 6px; }
.saved { font-size: 8px; line-height: 8px; text-align: right; color: #85878a; }
.saved b { display: block; color: #fff; }
.savebtn { width: 47px; height: 26px; gap: 6px; font-size: 11px; }
.publish { width: 60px; height: 26px; gap: 5px; background: #fff; color: #111; font-size: 11px; }

.transport { display: flex; align-items: center; height: 26px; margin: 3px 6px 7px 7px; }
.transport > .pill { height: 26px; flex: none; }
.transport > .gap { margin-left: 76px; }
.c26 { width: 27px; }
.circ { width: 26px; }
.metro { width: 46px; gap: 8px; }
.bpm { width: 52px; gap: 5px; }
.bpm small { font-size: 6px; line-height: 6px; font-weight: 700; }
.big { font-size: 12px; font-weight: 600; }
.sig { width: 38px; }
.sig i { color: #777; margin: 0 3px; font-style: normal; }
.key { width: 64px; margin-left: 9px; font-size: 11px; color: #74777a; }
.rec { width: 12px; height: 12px; border-radius: 50%; background: #f22f17; }
.time { width: 80px; display: flex; align-items: center; justify-content: center; font-size: 12px; font-weight: 600; font-family: Lato, sans-serif; }
.master { display: flex; align-items: center; margin-left: 103px; font-size: 8px; white-space: nowrap; }
.master input { appearance: none; width: 82px; height: 14px; margin: 0 9px 0 8px; background: linear-gradient(90deg, #2ba18d, #6fb260 30%, #a9d64d 60%, #2c2f31 60%) 0 3px / 100% 3px no-repeat, linear-gradient(90deg, #2ba18d, #6fb260 30%, #a9d64d 53%, #2c2f31 53%) 0 8px / 100% 3px no-repeat; }
.master input::-webkit-slider-thumb { appearance: none; width: 14px; height: 14px; border-radius: 50%; border: 2px solid #fff; background: #3d4143; }
.invite { width: 40px; height: 16px; border-radius: 8px; background: #2a8cf0; font-weight: 600; margin-right: 8px; }
.gift { position: relative; width: 20px; height: 20px; border-radius: 50%; background: #181d20; margin-right: 2px; }
.badge { position: absolute; top: -3px; right: -3px; width: 10px; height: 10px; border-radius: 50%; background: #dc3326; font-size: 8px; line-height: 10px; text-align: center; }

.arrange { flex: 1; display: flex; min-height: 200px; }
.side { width: 181px; border-right: 1px solid #15191b; flex: none; }
.addrow { height: 26px; display: flex; align-items: center; padding: 0 6px 0 5px; }
.add { width: 69px; height: 20px; gap: 5px; margin-right: auto; }
.round { width: 21px; height: 20px; margin-left: 5px; }
.track { height: 53px; background: #1c2124; border-right: 3px solid #8712ae; padding: 2px 0 0 5px; }
.t1 { display: flex; align-items: center; height: 15px; font-size: 8px; }
.t1 b { margin-left: 4px; flex: 1; white-space: nowrap; }
.v { width: 10px; height: 10px; margin-right: 2px; }
.ms { display: flex; width: 32px; height: 13px; border-radius: 7px; background: #31373b; font-weight: 700; }
.ms button { flex: 1; }
.exp { width: 13px; height: 13px; border-radius: 50%; background: #31373b; margin: 0 2px 0 4px; }
.t2 { display: grid; grid-template-columns: 118px 1fr 16px auto; align-items: end; padding-left: 12px; padding-right: 3px; column-gap: 2px; }
.fx { grid-column: 1 / 5; justify-self: start; width: 20px; height: 14px; font-size: 8px; line-height: 9px; border-radius: 9px; background: #282e31; text-align: center; }
.t2 input { appearance: none; width: 118px; height: 14px; margin: 0; background: linear-gradient(90deg, #9a14c6 71%, #2a2e31 71%) 0 6px / 100% 2px no-repeat; }
.t2 input::-webkit-slider-thumb { appearance: none; width: 6px; height: 6px; border-radius: 50%; background: #fff; }
.knob { width: 15px; height: 15px; border-radius: 50%; background: linear-gradient(#1c2124, #1c2124) 50% 0 / 2px 6px no-repeat, #fff; }
.lr { font-size: 5px; color: #aaa; text-align: right; }

.lanes { flex: 1; min-width: 0; position: relative; display: flex; flex-direction: column; }
.ruler { margin-left: 8px; height: 26px; display: grid; grid-template-columns: repeat(21, 10fr) 1fr; background: #0c0f11; font-size: 8px; line-height: 13px; color: #c9cbcd; }
.ruler span { border-left: 1px solid #2d3133; padding-left: 2px; background: linear-gradient(90deg, transparent calc(100% - 1px), #3a3e40 0) 0 100% / 25% 6px repeat-x; }
.ruler .loop { background: linear-gradient(90deg, transparent calc(100% - 1px), #3a3e40 0) 0 100% / 25% 6px repeat-x, linear-gradient(#7d130f, #7d130f) 0 0 / 100% 13px no-repeat; color: #d3a09a; }
.zooms { position: absolute; right: 0; top: 0; height: 29px; display: flex; background: #11181a; }
.zooms button { width: 31px; border-left: 1px solid #1b2224; }
.zooms.small { height: 26px; } .zooms.small button { width: 26px; }
.lane { margin-left: 8px; height: 53px; display: grid; grid-template-columns: repeat(21, 10fr) 1fr; grid-template-rows: 53px; }
.bar { background: linear-gradient(90deg, rgba(100, 90, 120, .18) 1px, transparent 0) 0 0 / 25% 100%, #210f2b; border-left: 1px solid #2a1b3c; }
.alt { background-color: #241239; }
.clip { grid-column: span 4; margin: 1px 0; border: 1px solid #e6d5ed; border-radius: 2px; background: linear-gradient(90deg, #7d05a3 1px, transparent 0) 0 0 / 25% 100%, #71049a; display: flex; flex-direction: column; overflow: hidden; }
.cliphead { height: 10px; flex: none; background: #5e0183; display: flex; align-items: center; justify-content: space-between; padding: 0 2px; font-size: 6px; font-weight: 700; }
.mini { height: 39px; width: 100%; fill: #a932d6; }
.drop { margin: 4px 7px 0 15px; height: 46px; border: 1px dashed #37393a; border-radius: 5px; display: flex; flex-direction: column; align-items: center; justify-content: center; font-family: Lato, "Noto Sans CJK SC", sans-serif; font-size: 11px; line-height: 14px; font-weight: 500; }
.hscroll { width: 249px; height: 6px; border-radius: 3px; background: #565759; margin-bottom: 3px; }
.playhead { position: absolute; left: 7px; top: 26px; bottom: 0; width: 1px; background: #dcdcdc; }
.playhead::before { content: ""; position: absolute; left: -2px; top: -4px; width: 5px; height: 5px; border-radius: 50%; background: #fff; }

.editor { position: relative; display: flex; height: 241px; background: #0b0e10; border-top: 1px solid #191d20; flex: none; }
.epanel { width: 181px; border-right: 1px solid #15191b; flex: none; }
.ehead { height: 29px; display: flex; align-items: center; gap: 7px; border-bottom: 1px solid #171c1f; font-size: 9px; }
.ex { width: 32px; height: 29px; border-right: 1px solid #171c1f; }
.ehead b { font-weight: 500; }
.ebody { padding: 7px 7px 0; font-size: 9px; color: #7d8285; display: flex; flex-direction: column; }
.row { display: flex; align-items: center; justify-content: space-between; }
.modes { height: 17px; color: #fff; width: 80px; }
.modes button { flex: 1; }
.modes .vkey { border-left: 1px solid #2a3033; }
.sel { background: #fff; color: #111; border-radius: 9px; }
.hp { width: 20px; height: 20px; margin: -1px -2px -2px 0; border-radius: 50%; background: #35084a; color: #8d14b8; }
h2 { display: flex; align-items: center; gap: 5px; font-size: 9px; height: 14px; color: #fff; font-weight: 600; white-space: nowrap; }
.h-midi { margin-top: 10px; } .h-smart { margin-top: 11px; gap: 3px; }
.vel { margin-top: 4px; font-size: 8px; } .vel b { color: #fff; }
.sm { height: 15px; font-size: 8px; }
.rnd { width: 36px; }
.thin { appearance: none; width: 100%; height: 1px; margin: 5px 0 0; background: #343a3d; }
.thin::-webkit-slider-thumb { appearance: none; width: 0; height: 0; }
.two { margin-top: 8px; gap: 5px; } .two button { flex: 1; }
.q { margin-top: 5px; gap: 6px; }
.selwrap { position: relative; flex: 1; display: flex; align-items: center; color: #7d8285; background: #141a1d; border-radius: 8px; height: 16px; }
.selwrap select { appearance: none; border: 0; background: none; font: inherit; font-size: 8px; color: inherit; width: 100%; height: 16px; padding: 0 11px; }
.selwrap svg { position: absolute; right: 7px; pointer-events: none; }
.qz { width: 31px; height: 25px; line-height: 9px; font-size: 8px; }
.tr { margin-top: 6px; font-size: 8px; } .tr b { color: #fff; } .tr .seg { width: 111px; } .tr button { flex: 1; }
.sv { margin-top: 4px; gap: 10px; }
.sv input { appearance: none; width: 19px; height: 10px; margin: 0; border-radius: 5px; background: radial-gradient(circle at 5px 5px, #000 4px, transparent 5px), #323946; }
.scale { flex: 1; display: flex; }
.root { flex: 0 0 41px; border-radius: 8px 0 0 8px; } .mode { border-radius: 0 8px 8px 0; }
.scale select { color: #4b5052; } .scale svg { color: #aaa; }

.roll { flex: 1; min-width: 0; position: relative; display: flex; flex-direction: column; }
.roll > .playhead { left: 45px; top: 28px; bottom: 1px; }
.rhead { height: 29px; display: flex; }
.oct { width: 38px; display: flex; align-items: center; justify-content: center; }
.oct button { width: 28px; height: 11px; font-size: 7px; font-weight: 600; }
.beats { flex: 1; margin-left: 8px; display: grid; grid-template-columns: repeat(19, minmax(0, 100fr)) minmax(0, 62fr); font-size: 8px; line-height: 23px; font-weight: 500; }
.beats span { border-left: 1px solid #15191b; padding-left: 1px; }
.rbody { position: relative; height: 210px; display: flex; }
.keys { width: 37px; position: relative; }
.keys svg { width: 37px; height: 210px; display: block; }
.kl { position: absolute; right: 4px; color: #222; font-size: 5px; line-height: 6px; white-space: nowrap; font-weight: 600; }
.k5 { top: 10px; } .k4 { top: 88px; } .k3 { top: 166px; }
.canvas { flex: 1; margin-left: 9px; position: relative; overflow: hidden; }
.gridsvg { width: 100%; height: 210px; display: block; }
.rb { fill: #13171a; } .rw { fill: #202429; } .rc { fill: #393d45; }
.ib { fill: #21142b; } .iw { fill: #2f223c; } .ic { fill: #433c54; }
.gl { fill: #fff; fill-opacity: .03; } .strong { fill-opacity: .08; }
.cname { position: absolute; left: 4px; top: 4px; font-size: 7px; line-height: 10px; font-weight: 600; }
.ccyc { position: absolute; left: 80.500%; top: 4px; }
.cursor { position: absolute; left: 21px; top: 28px; width: 10px; height: 14px; }
.vscroll { position: absolute; right: 2px; top: 97px; width: 6px; height: 45px; border-radius: 3px; background: #696b6f; }
.kscroll { position: absolute; left: 38px; bottom: 3px; width: 56px; height: 6px; border-radius: 3px; background: rgba(150, 145, 155, .65); }
.watermark { position: absolute; left: 103px; top: 172px; display: flex; flex-direction: column; align-items: center; color: rgba(140, 143, 145, .85); font-family: "Open Sans", "Noto Sans CJK SC", sans-serif; font-weight: 700; pointer-events: none; white-space: nowrap; }
.watermark span { font-size: 15px; line-height: 19px; }
.watermark strong { font-size: 19px; line-height: 22px; }

.bottom { height: 32px; display: flex; align-items: center; padding: 0 8px 1px 7px; background: #0b0e10; flex: none; font-weight: 500; }
.bottom .pill { height: 20px; }
.bottom .left { width: 207px; align-items: center; }
.bottom button { gap: 5px; }
.b1 { width: 82px; font-size: 8px; } .b2 { width: 49px; font-size: 8px; }
.bottom .left .sel { flex: 1; height: 17px; gap: 3px; font-size: 8px; white-space: nowrap; }
.seg.left .b2 { border-left: 1px solid #2f3537; }
.rgt { width: 210px; margin-right: 5px; align-items: center; font-size: 8px; }
.rgt button + button { border-left: 1px solid #2f3537; }
.r1 { width: 71px; } .r2 { width: 87px; } .r3 { flex: 1; }
.r2.r2 { gap: 1px; font-weight: 700; font-family: Lato, sans-serif; font-size: 9px; } .r2 em { font-style: normal; font-weight: 400; }
.short { width: 61px; font-size: 8px; }

.taskbar { height: 26px; display: flex; align-items: center; background: #0d0d0d; }
.apps { width: 634px; height: 26px; display: flex; }
.apps button { flex: 1; }
.apps svg { width: 16px; height: 16px; }
.apps .on { background: linear-gradient(#6aa7dc, #6aa7dc) 50% 100% / 26px 1px no-repeat; }
.apps .act { background: linear-gradient(#6aa7dc, #6aa7dc) 50% 100% / 100% 1px no-repeat, #303133; }
.tray { width: 168px; display: flex; align-items: center; justify-content: space-between; }
.tray svg { width: 12px; height: 12px; }
.pen { margin-left: 6px; }
.ime { font-size: 11px; margin: 0 5px 0 6px; }
time { width: 46px; font-size: 8px; line-height: 12px; padding-top: 1px; text-align: center; margin-right: 4px; }
</style>
